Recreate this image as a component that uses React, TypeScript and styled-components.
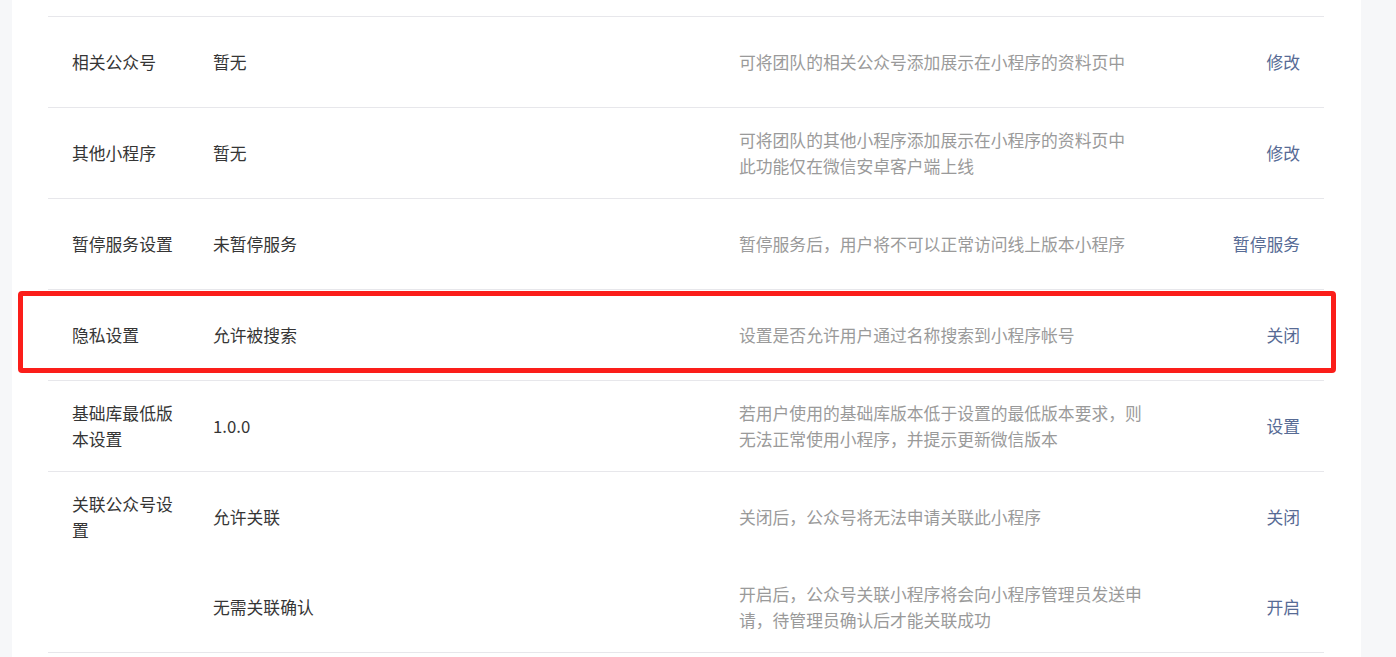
import styled, { createGlobalStyle } from 'styled-components'

const GlobalStyle = createGlobalStyle`
  html, body {
    margin: 0;
    padding: 0;
    background: #f6f7f9;
    font-family: "Noto Sans CJK SC", "Noto Sans", sans-serif;
  }
`

const Page = styled.div`
  height: 657px;
  overflow: hidden;
  padding-left: 12px;
`

const Card = styled.div`
  width: 1349px;
  min-height: 657px;
  background: #fff;
  box-sizing: border-box;
  padding: 16px 37px 0 36px;
`

const List = styled.div`
  border-top: 1px solid #e7e7eb;
`

const Row = styled.div<{ $last?: boolean }>`
  position: relative;
  display: flex;
  align-items: center;
  min-height: 90px;
  padding: 0 24px;
  border-bottom: ${(p) => (p.$last ? '1px solid #e7e7eb' : 'none')};
  font-size: 16.8px;
  line-height: 26px;
`

const Label = styled.div`
  width: 112px;
  margin-right: 29px;
  flex: 0 0 auto;
  color: #353535;
`

const Value = styled.div`
  width: 526px;
  flex: 0 0 auto;
  color: #353535;
`

const Desc = styled.div`
  width: 410px;
  flex: 0 0 auto;
  color: #9a9a9a;
`

const Action = styled.a`
  flex: 1;
  text-align: right;
  color: #576b95;
  text-decoration: none;
  cursor: pointer;
`

const Highlight = styled.div`
  position: absolute;
  left: -30px;
  right: -12px;
  top: 1px;
  height: 82px;
  box-sizing: border-box;
  border: 5px solid #fb1e1a;
  border-radius: 4px;
  pointer-events: none;
`

type Item = {
  label: string
  value: string
  desc: string[]
  action: string
  highlight?: boolean
  joined?: boolean
}

const items: Item[] = [
  { label: '相关公众号', value: '暂无', desc: ['可将团队的相关公众号添加展示在小程序的资料页中'], action: '修改' },
  {
    label: '其他小程序',
    value: '暂无',
    desc: ['可将团队的其他小程序添加展示在小程序的资料页中', '此功能仅在微信安卓客户端上线'],
    action: '修改',
  },
  { label: '暂停服务设置', value: '未暂停服务', desc: ['暂停服务后，用户将不可以正常访问线上版本小程序'], action: '暂停服务' },
  {
    label: '隐私设置',
    value: '允许被搜索',
    desc: ['设置是否允许用户通过名称搜索到小程序帐号'],
    action: '关闭',
    highlight: true,
  },
  {
    label: '基础库最低版本设置',
    value: '1.0.0',
    desc: ['若用户使用的基础库版本低于设置的最低版本要求，则无法正常使用小程序，并提示更新微信版本'],
    action: '设置',
  },
  {
    label: '关联公众号设置',
    value: '允许关联',
    desc: ['关闭后，公众号将无法申请关联此小程序'],
    action: '关闭',
    joined: true,
  },
  {
    label: '',
    value: '无需关联确认',
    desc: ['开启后，公众号关联小程序将会向小程序管理员发送申请，待管理员确认后才能关联成功'],
    action: '开启',
  },
]

const App = () => {
  return (
    <Page>
      <GlobalStyle />
      <Card>
        <List>
          {items.map((item, i) => (
            <Row key={i} $last={!item.joined}>
              <Label>{item.label}</Label>
              <Value>{item.value}</Value>
              <Desc>
                {item.desc.map((line, j) => (
                  <div key={j}>{line}</div>
                ))}
              </Desc>
              <Action>{item.action}</Action>
              {item.highlight && <Highlight />}
            </Row>
          ))}
        </List>
      </Card>
    </Page>
  )
}

export default App
